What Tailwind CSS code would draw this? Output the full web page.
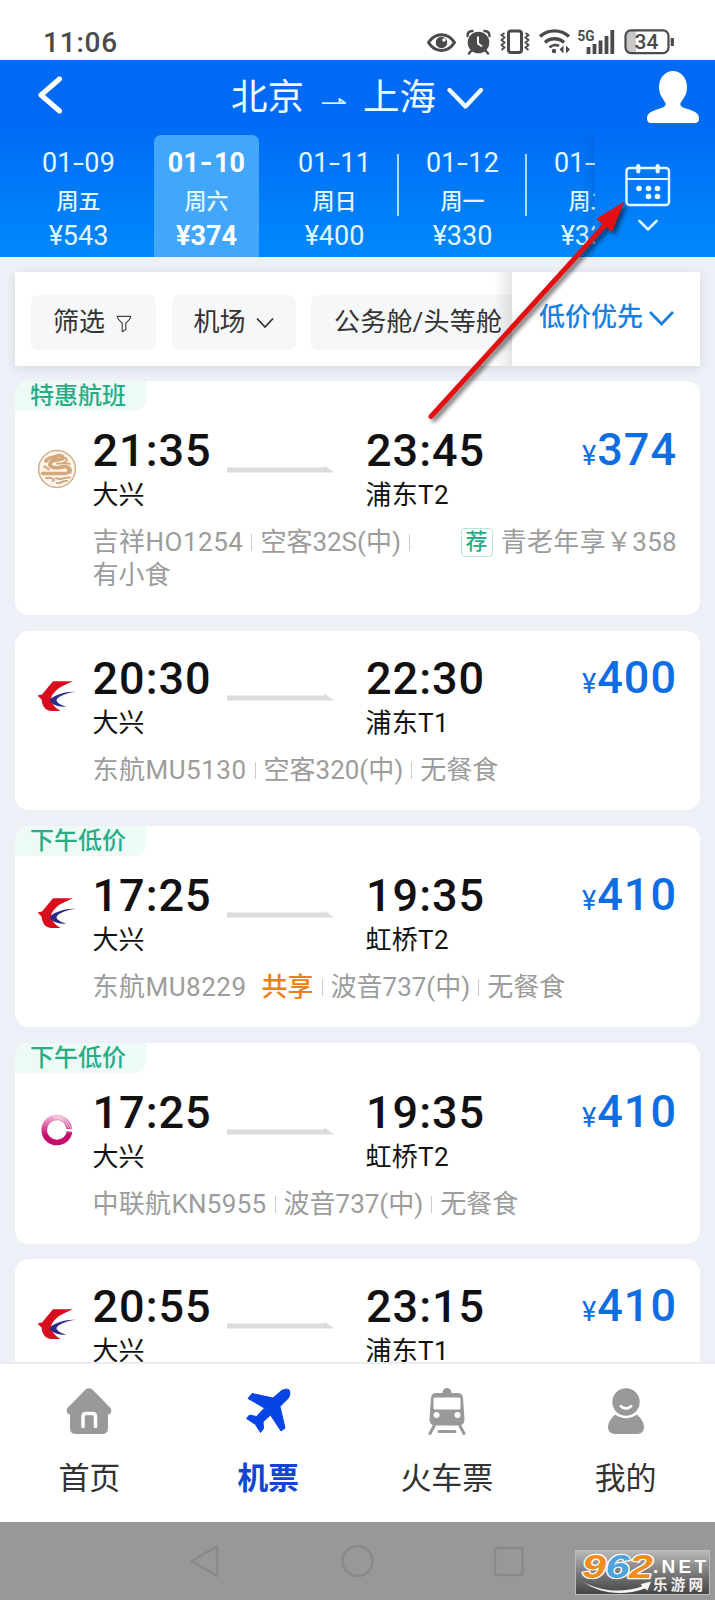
<!DOCTYPE html>
<html lang="zh-CN">
<head>
<meta charset="utf-8">
<title>机票 北京 - 上海</title>
<script src="https://cdn.jsdelivr.net/npm/@tailwindcss/browser@4"></script>
</head>
<body class="bg-[#edf0f6]">
<svg class="absolute h-0 w-0">
  <defs>
    <linearGradient id="pinkfade" x1="0" y1="0" x2="0" y2="1"><stop offset="0" stop-color="#eda6cc"/><stop offset=".45" stop-color="#d64293"/><stop offset=".7" stop-color="#c60d6c"/></linearGradient>
    <symbol id="route" viewBox="0 0 107 8"><path d="M0 2.500H97.500V.500L107 7.500H0Z" fill="#dcdcdc"/></symbol>
    <symbol id="eastern" viewBox="0 0 40 32">
      <path d="M16 1.200H36C30 4.200 20.500 6.500 15 15.500C12.500 20.500 16 26.500 23.500 31H16C10 31 5.500 28.500 4.500 19.500L.500 15.500L5 14.500Z" fill="#d80c1c"/>
      <path d="M39 11.800C27 11 14.500 16.500 12.500 20.500C15 25 22 27 30 26.800C24 25.500 19.500 22.500 19.500 20C21 16.500 29 13 39 11.800Z" fill="#2c2a86"/>
    </symbol>
    <symbol id="juneyao" viewBox="0 0 40 40">
      <circle cx="20" cy="20" r="18.400" fill="#fdf5ec" stroke="#d2b08c" stroke-width="1.500"/>
      <g fill="none" stroke="#d3a87c" stroke-linecap="round">
        <path d="M9 12C12 7 17 9 19 7.500C22 5.500 27 7 26 9.500C24 11.500 15 9.500 13 14.500C12 18 17 20 25 18C31 16.500 34 19.500 33 23" stroke-width="3.600"/>
        <path d="M5.500 24.500H28C31 24.500 33 22 31.500 20" stroke-width="3.400"/>
        <path d="M9 29C15 28 19 30.500 16 32M19 29C23 32 26 28 33 28.500M20 34C24 35 26 31 30 32" stroke-width="2"/>
        <path d="M28 9C31 10 30 13 26 14M33 15C30 13 27 15 20 14.500M7 18C9 16 9.500 20 12 20.500" stroke-width="2"/>
      </g>
    </symbol>
    <symbol id="united" viewBox="0 0 34 34">
      <path d="M29.500 16C28 9 23 4.500 17 4.500C9.800 4.500 4.200 10 4.200 17C4.200 24 9.800 29.500 17 29.500C23.500 29.500 28.500 25 29.600 18.500" fill="none" stroke="url(#pinkfade)" stroke-width="5.600"/>
      <path d="M26 17.200H33.500" stroke="#fff" stroke-width="2"/>
      <path d="M12 3.500C20 1 28 7 31 15M14 5.500C20 4 26 8 28.500 15" fill="none" stroke="#fff" stroke-width=".700"/>
    </symbol>
  </defs>
</svg>

<div class="relative flex h-[1600px] w-[715px] flex-col overflow-hidden bg-[#edf0f6] font-[Roboto,'Noto_Sans_CJK_SC',sans-serif] text-[#111]">

  <!-- status bar -->
  <header class="flex h-[60px] shrink-0 items-center bg-white pl-[43px] pt-[25px] text-[#4a4a4a]">
    <span class="w-[384px] text-[28px] font-medium leading-[36px] tracking-[0.8px]">11:06</span>
    <svg class="mb-[1px] h-[26px] w-[250px]" viewBox="427 29 250 26" fill="none" stroke="#4a4a4a">
      <path d="M428.500 42.500C435 32 448 32 454.500 42.500C448 53 435 53 428.500 42.500Z" stroke-width="3"/>
      <circle cx="441.500" cy="42.500" r="5.800" fill="#4a4a4a" stroke="none"/><circle cx="444" cy="40" r="1.800" fill="#fff" stroke="none"/>
      <circle cx="478.500" cy="42.500" r="10.800" fill="#4a4a4a" stroke="none"/>
      <path d="M467.500 36C467.500 33 469.500 31 472.500 31M489.500 36C489.500 33 487.500 31 484.500 31M471.500 50.500L469 53.500M485.500 50.500L488 53.500" stroke-width="2.400" stroke-linecap="round"/>
      <path d="M478 36.500V43.500L482 46.500" stroke="#fff" stroke-width="2"/>
      <rect x="508.500" y="31" width="13" height="21.500" rx="2.500" stroke-width="3"/>
      <path d="M504.500 33L501.500 35L504.500 37.500L501.500 40L504.500 42.500L501.500 45L504.500 47.500L501.500 50M525.500 33L528.500 35L525.500 37.500L528.500 40L525.500 42.500L528.500 45L525.500 47.500L528.500 50" stroke-width="1.800"/>
      <path d="M540 36.500C548 29 561 29 569 36.500M545 42.500C550.500 37.500 558.500 37.500 564 42.500" stroke-width="3.400"/>
      <path d="M549.500 47.500C552.500 44.500 556.500 44.500 559 46" stroke-width="2.600"/>
      <circle cx="554" cy="51" r="2.200" fill="#4a4a4a" stroke="none"/>
      <path d="M559.500 49.500L563.500 45.500V53.500ZM570 49.500L566 45.500V53.500Z" fill="#4a4a4a" stroke="none"/>
      <text x="577.500" y="41" font-size="14.500" font-weight="700" fill="#4a4a4a" stroke="none" textLength="17" lengthAdjust="spacingAndGlyphs">5G</text>
      <path d="M588.500 54V47M594.500 54V44M600.500 54V40.500M606.500 54V36M612.300 54V30" stroke-width="3.800"/>
      <path d="M636 31H629.500Q626 31 626 35V49Q626 53 629.500 53H636Z" fill="#c8c8c8" stroke="none"/>
      <rect x="625.500" y="30.300" width="43" height="22.800" rx="5.500" stroke-width="2.200"/>
      <path d="M672.300 38V46" stroke-width="3.200"/>
      <text x="634.500" y="49.300" font-size="21" font-weight="500" fill="#4a4a4a" stroke="none" textLength="24">34</text>
    </svg>
  </header>

  <!-- route and dates -->
  <section class="h-[197px] shrink-0 bg-linear-to-b from-[#006af5] from-30% to-[#0088fb]">
    <div class="flex h-[75px] items-center pl-[38px] text-white">
      <svg class="mb-[5px] h-[38px] w-[26px]" viewBox="0 0 26 38"><path d="M21.500 3L3 19L21.500 35" fill="none" stroke="#fff" stroke-width="5" stroke-linecap="round" stroke-linejoin="round"/></svg>
      <div class="ml-[167px] flex items-center text-[36.5px] leading-[75px] text-[#f0fbff]">
        <span>北京</span>
        <svg class="ml-[18px] mt-[9px] h-[8px] w-[24px]" viewBox="0 0 24 8"><path d="M0 5.200H23.500L17.500 1V5" fill="none" stroke="#d9f2ff" stroke-width="1.700"/></svg>
        <span class="ml-[17px]">上海</span>
        <svg class="ml-[11px] mt-[2px] h-[24px] w-[36px]" viewBox="0 0 36 24"><path d="M2.500 3L18.500 19.500L34 3" fill="none" stroke="#f0fbff" stroke-width="4.300" stroke-linecap="round" stroke-linejoin="round"/></svg>
      </div>
      <svg class="ml-[163px] mb-[1px] h-[54px] w-[54px]" viewBox="0 0 54 54"><path d="M27 1C35 1 41 8 41 17C41 25 37.500 28 34.500 33C34 36 35.500 37 40 38.500C49 41.500 53 43 53 48.500C53 51.500 51.500 53 49 53H5C2.500 53 1 51.500 1 48.500C1 43 5 41.500 14 38.500C18.500 37 20 36 19.500 33C16.500 28 13 25 13 17C13 8 19 1 27 1Z" fill="#fff"/></svg>
    </div>
    <div class="flex h-[122px] text-center text-[27px] text-[#e2f8ff]">
      <div class="relative w-[595px] overflow-hidden">
        <div class="flex w-[655px] pl-[14.5px]">
          <div class="w-[128px] shrink-0 pt-[11px]"><p class="h-[34px] leading-[34px] tracking-[0.2px]">01<span class="mx-[2px] inline-block scale-x-150">-</span>09</p><p class="h-[43px] text-[22px] font-medium leading-[44px]">周五</p><p class="h-[26px] leading-[26px]">¥543</p></div>
          <div class="h-[122px] w-[128px] shrink-0 px-[11.5px]"><div class="h-full rounded-t-[7px] bg-[#42a7fa] pt-[11px] text-white"><p class="h-[34px] font-bold leading-[34px] tracking-[0.2px]">01<span class="mx-[2px] inline-block scale-x-125">-</span>10</p><p class="h-[43px] text-[22px] font-medium leading-[44px] text-[#e2f8ff]">周六</p><p class="h-[26px] font-bold leading-[26px]">¥374</p></div></div>
          <div class="w-[128px] shrink-0 pt-[11px]"><p class="h-[34px] leading-[34px] tracking-[0.2px]">01<span class="mx-[2px] inline-block scale-x-150">-</span>11</p><p class="h-[43px] text-[22px] font-medium leading-[44px]">周日</p><p class="h-[26px] leading-[26px]">¥400</p></div>
          <div class="-ml-[2px] mt-[19px] h-[62px] w-[2px] shrink-0 bg-[#a9dcff]"></div>
          <div class="w-[128px] shrink-0 pt-[11px]"><p class="h-[34px] leading-[34px] tracking-[0.2px]">01<span class="mx-[2px] inline-block scale-x-150">-</span>12</p><p class="h-[43px] text-[22px] font-medium leading-[44px]">周一</p><p class="h-[26px] leading-[26px]">¥330</p></div>
          <div class="-ml-[2px] mt-[19px] h-[62px] w-[2px] shrink-0 bg-[#a9dcff]"></div>
          <div class="w-[128px] shrink-0 pt-[11px]"><p class="h-[34px] leading-[34px] tracking-[0.2px]">01<span class="mx-[2px] inline-block scale-x-150">-</span>13</p><p class="h-[43px] text-[22px] font-medium leading-[44px]">周二</p><p class="h-[26px] leading-[26px]">¥330</p></div>
        </div>
        <div class="absolute inset-y-0 right-0 w-[16px] bg-linear-to-r from-transparent to-[#0050b0]/20"></div>
      </div>
      <div class="flex w-[105px] flex-col items-center pt-[28px]">
        <svg class="h-[46px] w-[46px]" viewBox="0 0 46 46" fill="none" stroke="#e2f8ff">
          <rect x="1.500" y="5" width="42.500" height="37" rx="3" stroke-width="2.400"/><path d="M1.500 16H44" stroke-width="2.200"/>
          <path d="M13.300 3V8.500M32.700 3V8.500" stroke-width="4.200" stroke-linecap="round"/>
          <g fill="#f0fbff" stroke="none"><circle cx="14" cy="25.500" r="2.800"/><circle cx="23.500" cy="25.500" r="2.800"/><circle cx="32.500" cy="25.500" r="2.800"/><circle cx="23.500" cy="33.500" r="2.800"/><circle cx="32.500" cy="33.500" r="2.800"/></g>
        </svg>
        <svg class="mt-[10px] h-[13px] w-[20px]" viewBox="0 0 20 13"><path d="M1.500 2L10 10.500L18.500 2" fill="none" stroke="#e2f8ff" stroke-width="2.600" stroke-linecap="round"/></svg>
      </div>
    </div>
  </section>

  <!-- filters -->
  <section class="mx-[15px] mt-[15px] flex h-[94px] shrink-0 bg-white text-[26px] text-[#333] shadow-[0_2px_10px_rgba(0,0,0,0.10)]">
    <div class="relative flex w-[497px] gap-[15.5px] overflow-hidden pl-[16px] pt-[23px] leading-[53px]">
      <div class="flex h-[55px] w-[125px] shrink-0 items-center rounded-[7px] bg-[#f6f7f9] pb-[1px] pl-[22px]">筛选
        <svg class="ml-[11px] mt-[3px] h-[18px] w-[16px]" viewBox="0 0 17 20" fill="none" stroke="#444" stroke-width="1.300" stroke-linejoin="round"><path d="M1 1.500H16L15 4.500L10.500 9V16L6.500 18.500V9L2 4.500Z"/></svg></div>
      <div class="flex h-[55px] w-[124px] shrink-0 items-center rounded-[7px] bg-[#f6f7f9] pb-[1px] pl-[22px]">机场
        <svg class="ml-[10px] mt-[1px] h-[12px] w-[18px]" viewBox="0 0 18 12" fill="none" stroke="#333" stroke-width="1.800"><path d="M1 1.500L9 10L17 1.500"/></svg></div>
      <div class="flex h-[55px] w-[215px] shrink-0 items-center rounded-[7px] bg-[#f6f7f9] pb-[1px] pl-[23px] tracking-[0.2px]">公务舱/头等舱</div>
      <div class="absolute inset-y-0 right-0 w-[18px] bg-linear-to-r from-transparent to-black/10"></div>
    </div>
    <div class="flex flex-1 items-center pb-[3px] pl-[27px] font-medium text-[#1b80dc]">低价优先
      <svg class="ml-[6px] h-[16px] w-[25px]" viewBox="0 0 25 16" fill="none" stroke="#1b80dc" stroke-width="2.800"><path d="M1 2L12.500 14L24 2"/></svg></div>
  </section>

  <!-- flights -->
  <main class="flex flex-1 flex-col overflow-hidden px-[15px] pt-[15px]">

    <article class="mb-[16px] h-[234px] shrink-0 overflow-hidden rounded-[14px] bg-white">
      <div class="h-[30px] w-[131px] rounded-br-[12px] bg-[#edfaf6] pl-[15px] text-[24px] font-medium leading-[30px] text-[#27ad86]">特惠航班</div>
      <div class="flex pr-[24px] pt-[13px]">
        <div class="w-[77.5px] shrink-0 pl-[22px] pt-[25px]"><svg class="h-[40px] w-[40px]"><use href="#juneyao"/></svg></div>
        <div class="flex-1">
          <div class="grid h-[53px] grid-cols-[134.5px_139px_1fr] text-[45px] font-medium leading-[53px] tracking-[1px]">
            <span>21:35</span><svg class="mt-[41px] h-[8px] w-[107px]"><use href="#route"/></svg>
            <div class="flex justify-between"><span>23:45</span><span class="-mr-[1px] -mt-[1.5px] text-[#0f6de2]"><span class="text-[27px] font-normal">¥</span>374</span></div>
          </div>
          <div class="grid h-[35px] grid-cols-[273px_1fr] text-[26px] leading-[36px]"><span>大兴</span><span class="tracking-[0.3px]">浦东T2</span></div>
          <div class="mt-[13.5px] flex text-[26px] leading-[33px] text-[#9c9c9c]">
            <div class="flex w-[340px] flex-wrap items-center"><span class="tracking-[0.5px]">吉祥HO1254</span><i class="mx-[8px] h-[17px] w-px bg-[#ccc]"></i><span>空客32S(中)</span><i class="ml-[8px] h-[17px] w-px bg-[#ccc]"></i><span class="w-full">有小食</span></div>
            <div class="-mr-[1px] ml-auto flex h-[33px] items-center whitespace-nowrap tracking-[0.3px]"><span class="mr-[8px] h-[29px] w-[32px] rounded-[4px] border border-[#b4e6d8] text-center text-[22px] font-medium leading-[26px] text-[#27ad86]">荐</span>青老年享￥358</div>
          </div>
        </div>
      </div>
    </article>

    <article class="mb-[16px] h-[179px] shrink-0 overflow-hidden rounded-[14px] bg-white">
      <div class="flex pr-[24px] pt-[21px]">
        <div class="w-[77.5px] shrink-0 pl-[22px] pt-[28px]"><svg class="h-[32px] w-[40px]"><use href="#eastern"/></svg></div>
        <div class="flex-1">
          <div class="grid h-[53px] grid-cols-[134.5px_139px_1fr] text-[45px] font-medium leading-[53px] tracking-[1px]">
            <span>20:30</span><svg class="mt-[41px] h-[8px] w-[107px]"><use href="#route"/></svg>
            <div class="flex justify-between"><span>22:30</span><span class="-mr-[1px] -mt-[1.5px] text-[#0f6de2]"><span class="text-[27px] font-normal">¥</span>400</span></div>
          </div>
          <div class="grid h-[35px] grid-cols-[273px_1fr] text-[26px] leading-[36px]"><span>大兴</span><span class="tracking-[0.3px]">浦东T1</span></div>
          <div class="mt-[13.5px] flex items-center text-[26px] leading-[33px] text-[#9c9c9c]"><span class="tracking-[0.5px]">东航MU5130</span><i class="mx-[8px] h-[17px] w-px bg-[#ccc]"></i><span>空客320(中)</span><i class="mx-[8px] h-[17px] w-px bg-[#ccc]"></i><span>无餐食</span></div>
        </div>
      </div>
    </article>

    <article class="mb-[16px] h-[201px] shrink-0 overflow-hidden rounded-[14px] bg-white">
      <div class="h-[30px] w-[131px] rounded-br-[12px] bg-[#edfaf6] pl-[15px] text-[24px] font-medium leading-[30px] text-[#27ad86]">下午低价</div>
      <div class="flex pr-[24px] pt-[13px]">
        <div class="w-[77.5px] shrink-0 pl-[22px] pt-[28px]"><svg class="h-[32px] w-[40px]"><use href="#eastern"/></svg></div>
        <div class="flex-1">
          <div class="grid h-[53px] grid-cols-[134.5px_139px_1fr] text-[45px] font-medium leading-[53px] tracking-[1px]">
            <span>17:25</span><svg class="mt-[41px] h-[8px] w-[107px]"><use href="#route"/></svg>
            <div class="flex justify-between"><span>19:35</span><span class="-mr-[1px] -mt-[1.5px] text-[#0f6de2]"><span class="text-[27px] font-normal">¥</span>410</span></div>
          </div>
          <div class="grid h-[35px] grid-cols-[273px_1fr] text-[26px] leading-[36px]"><span>大兴</span><span class="tracking-[0.3px]">虹桥T2</span></div>
          <div class="mt-[13.5px] flex items-center text-[26px] leading-[33px] text-[#9c9c9c]"><span class="tracking-[0.5px]">东航MU8229</span><span class="ml-[15px] font-medium text-[#e8811c]">共享</span><i class="mx-[8px] h-[17px] w-px bg-[#ccc]"></i><span>波音737(中)</span><i class="mx-[8px] h-[17px] w-px bg-[#ccc]"></i><span>无餐食</span></div>
        </div>
      </div>
    </article>

    <article class="mb-[15px] h-[201px] shrink-0 overflow-hidden rounded-[14px] bg-white">
      <div class="h-[30px] w-[131px] rounded-br-[12px] bg-[#edfaf6] pl-[15px] text-[24px] font-medium leading-[30px] text-[#27ad86]">下午低价</div>
      <div class="flex pr-[24px] pt-[13px]">
        <div class="w-[77.5px] shrink-0 pl-[25px] pt-[27px]"><svg class="h-[34px] w-[34px]"><use href="#united"/></svg></div>
        <div class="flex-1">
          <div class="grid h-[53px] grid-cols-[134.5px_139px_1fr] text-[45px] font-medium leading-[53px] tracking-[1px]">
            <span>17:25</span><svg class="mt-[41px] h-[8px] w-[107px]"><use href="#route"/></svg>
            <div class="flex justify-between"><span>19:35</span><span class="-mr-[1px] -mt-[1.5px] text-[#0f6de2]"><span class="text-[27px] font-normal">¥</span>410</span></div>
          </div>
          <div class="grid h-[35px] grid-cols-[273px_1fr] text-[26px] leading-[36px]"><span>大兴</span><span class="tracking-[0.3px]">虹桥T2</span></div>
          <div class="mt-[13.5px] flex items-center text-[26px] leading-[33px] text-[#9c9c9c]"><span class="tracking-[0.3px]">中联航KN5955</span><i class="mx-[8px] h-[17px] w-px bg-[#ccc]"></i><span>波音737(中)</span><i class="mx-[8px] h-[17px] w-px bg-[#ccc]"></i><span>无餐食</span></div>
        </div>
      </div>
    </article>

    <article class="h-[179px] shrink-0 overflow-hidden rounded-[14px] bg-white">
      <div class="flex pr-[24px] pt-[21px]">
        <div class="w-[77.5px] shrink-0 pl-[22px] pt-[28px]"><svg class="h-[32px] w-[40px]"><use href="#eastern"/></svg></div>
        <div class="flex-1">
          <div class="grid h-[53px] grid-cols-[134.5px_139px_1fr] text-[45px] font-medium leading-[53px] tracking-[1px]">
            <span>20:55</span><svg class="mt-[41px] h-[8px] w-[107px]"><use href="#route"/></svg>
            <div class="flex justify-between"><span>23:15</span><span class="-mr-[1px] -mt-[1.5px] text-[#0f6de2]"><span class="text-[27px] font-normal">¥</span>410</span></div>
          </div>
          <div class="grid h-[35px] grid-cols-[273px_1fr] text-[26px] leading-[36px]"><span>大兴</span><span class="tracking-[0.3px]">浦东T1</span></div>
        </div>
      </div>
    </article>
  </main>

  <!-- tab bar -->
  <nav class="grid h-[160px] shrink-0 grid-cols-4 border-t-2 border-[#ececef] bg-white pt-[24px] text-center text-[31px] text-[#333]">
    <div class="flex flex-col items-center">
      <svg class="h-[46px] w-[46px]" viewBox="0 0 46 46"><path d="M19.500 1.500Q23 -1 26.500 1.500L44.500 20Q47 25 42 26.500V40Q42 46 36 46H10Q4 46 4 40V26.500Q-1 25 1.500 20Z" fill="#999"/><path d="M17 38.500V28.500Q17 25.500 20 25.500H26.500Q29.500 25.500 29.500 28.500V38.500" fill="none" stroke="#fff" stroke-width="3.500" stroke-linecap="round"/></svg>
      <span class="mt-[22px] leading-[46px]">首页</span>
    </div>
    <div class="flex flex-col items-center font-bold text-[#1046d2]">
      <svg class="h-[46px] w-[46px]" viewBox="0 0 46 46"><path d="M28 10L36 3C39 1 42.500 .500 44 2C45.500 4 45 7.500 43 10.500L35 18.500L40 40L36 43L25.500 27L18 34L18.500 40.500L15.500 44.500L10.500 36.500L1.500 30.500L4.500 27L11.500 28.500L19.500 20L3 10.500L7 5.500Z" fill="#0744e6" stroke="#0744e6" stroke-width="1" stroke-linejoin="round"/></svg>
      <span class="mt-[22px] leading-[46px]">机票</span>
    </div>
    <div class="flex flex-col items-center">
      <svg class="h-[47px] w-[38px]" viewBox="0 0 38 47"><path d="M14.500 5Q15 0 19 0Q23 0 23.500 5H30Q34.500 5 35 10L36.500 31Q36.500 37 31 37.500H7Q1.500 37 1.500 31L3 10Q3.500 5 8 5Z" fill="#999"/><rect x="5.500" y="9.500" width="27" height="12" rx="1.500" fill="#fff"/><circle cx="8.500" cy="27" r="3" fill="#fff"/><circle cx="29.500" cy="27" r="3" fill="#fff"/><path d="M6 38L2 45.500M32 38L36 45.500M11 43.500H27" stroke="#999" stroke-width="3" stroke-linecap="round"/></svg>
      <span class="mt-[21px] leading-[46px]">火车票</span>
    </div>
    <div class="flex flex-col items-center">
      <svg class="h-[46px] w-[38px]" viewBox="0 0 38 46"><path d="M8 26.500Q19 34 30 26.500Q37 33 37 39Q37 46 30 46H8Q1 46 1 39Q1 33 8 26.500Z" fill="#999"/><circle cx="19" cy="14" r="13.700" fill="#999"/><path d="M13 17.500Q19 23.500 25 17.500" fill="none" stroke="#fff" stroke-width="2.600"/></svg>
      <span class="mt-[22px] leading-[46px]">我的</span>
    </div>
  </nav>

  <!-- system navigation -->
  <footer class="flex h-[78px] shrink-0 items-center bg-[#989898] pl-[189px]">
    <svg class="h-[36px] w-[336px]" viewBox="189 1543 336 36" fill="none" stroke="#898989" stroke-width="2.400" stroke-linejoin="round"><path d="M191.500 1561L217 1546.500V1576Z"/><circle cx="357.500" cy="1561" r="15"/><rect x="495" y="1548" width="27.500" height="27" rx="2"/></svg>
  </footer>

  <!-- site badge -->
  <div class="absolute left-[575px] top-[1550px] h-[45px] w-[135px] border border-[#bdbdbd] bg-linear-to-b from-[#b8b8b8] to-[#454545]">
    <svg class="h-full w-full" viewBox="0 0 133 43">
      <g font-family="Liberation Sans" font-weight="700" font-style="italic" font-size="34" stroke="#fff" stroke-width="2.400" stroke-linejoin="round" paint-order="stroke">
        <text x="6" y="27" textLength="24" lengthAdjust="spacingAndGlyphs" fill="#f18c1e">9</text><text x="29.500" y="27" textLength="24" lengthAdjust="spacingAndGlyphs" fill="#4fa3dc">6</text><text x="53" y="27" textLength="24" lengthAdjust="spacingAndGlyphs" fill="#f18c1e">2</text>
      </g>
      <text x="77" y="21.500" font-family="Liberation Sans" font-weight="700" font-size="19" fill="#fff" textLength="53">.NET</text>
      <text x="77" y="39" font-family="Noto Sans CJK SC" font-weight="700" font-size="14.500" fill="#f2f2f2" textLength="50">乐游网</text>
      <path d="M7 30.500C24 41 47 42 66 35.500L65 33L75 30.500L71.500 39.500L69 37.500C46 46 22 42 7 30.500Z" fill="#f4f4f4"/>
    </svg>
  </div>

  <!-- pointer to the calendar -->
  <svg class="pointer-events-none absolute left-[420px] top-[190px] h-[240px] w-[220px] drop-shadow-[3px_3px_2px_rgba(0,0,0,0.55)]" viewBox="420 190 220 240"><path d="M431 416.500L605 225" stroke="#e40f10" stroke-width="5" stroke-linecap="round"/><path d="M624.500 201.500L596 219L602 223L607 227.500L612 232Z" fill="#e40f10"/></svg>
</div>
</body>
</html>
